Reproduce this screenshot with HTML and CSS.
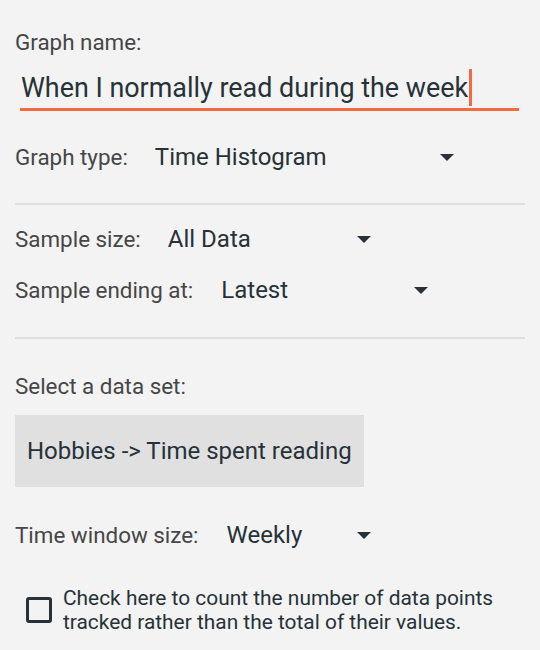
FILE: index.html
```html
<!DOCTYPE html>
<html>
<head>
<meta charset="utf-8">
<link rel="stylesheet" href="styles.css">
</head>
<body>
<div class="page">
  <div class="label name-label">Graph name:</div>
  <div class="name-input"><span class="name-text">When I normally read during the week</span><span class="cursor"></span></div>

  <div class="row type-row">
    <span class="label">Graph type:</span>
    <span class="select sel-type"><span class="value">Time Histogram</span><span class="arrow"></span></span>
  </div>

  <div class="divider div1"></div>

  <div class="row size-row">
    <span class="label">Sample size:</span>
    <span class="select sel-size"><span class="value">All Data</span><span class="arrow"></span></span>
  </div>
  <div class="row end-row">
    <span class="label">Sample ending at:</span>
    <span class="select sel-end"><span class="value">Latest</span><span class="arrow"></span></span>
  </div>

  <div class="divider div2"></div>

  <div class="label set-label">Select a data set:</div>
  <div class="dataset">Hobbies -&gt; Time spent reading</div>

  <div class="row window-row">
    <span class="label">Time window size:</span>
    <span class="select sel-window"><span class="value">Weekly</span><span class="arrow"></span></span>
  </div>

  <div class="check-row">
    <span class="checkbox"></span>
    <span class="check-text">Check here to count the number of data points tracked rather than the total of their values.</span>
  </div>
</div>
</body>
</html>
```

FILE: styles.css
```css
html, body {
  margin: 0;
  padding: 0;
  background: #f3f3f3;
}
body {
  font-family: Roboto, "Noto Sans", sans-serif;
  width: 540px;
  height: 650px;
  overflow: hidden;
}
.page {
  padding: 0 15px;
  display: flex;
  flex-direction: column;
}
.label {
  font-size: 22.4px;
  color: #464646;
  line-height: 26px;
}
.name-label {
  margin-top: 29px;
}
.name-input {
  margin-top: 14px;
  margin-left: 5px;
  margin-right: 6px;
  border-bottom: 3px solid #f26a3f;
  height: 39px;
  display: flex;
  align-items: flex-start;
  padding-left: 1px;
}
.name-text {
  font-size: 26.9px;
  color: #263238;
  line-height: 34px;
  margin-top: 2px;
}
.cursor {
  width: 3px;
  height: 37px;
  background: #f26a3f;
  margin-left: 1px;
}
.row {
  display: flex;
  align-items: center;
  height: 30px;
}
.select {
  display: flex;
  align-items: center;
}
.value {
  font-size: 24px;
  color: #263238;
  line-height: 30px;
}
.arrow {
  width: 0;
  height: 0;
  border-left: 7.5px solid transparent;
  border-right: 7.5px solid transparent;
  border-top: 7px solid #263238;
}
.type-row { margin-top: 31px; }
.sel-type { margin-left: 27px; width: 299px; justify-content: space-between; }
.divider {
  height: 2px;
  background: #dedede;
}
.div1 { margin-top: 31px; }
.size-row { margin-top: 19px; }
.sel-size { margin-left: 27px; width: 203px; justify-content: space-between; }
.end-row { margin-top: 21px; }
.sel-end { margin-left: 28px; width: 207px; justify-content: space-between; }
.div2 { margin-top: 32px; }
.set-label { margin-top: 34px; }
.dataset {
  margin-top: 16px;
  align-self: flex-start;
  background: #e0e0e0;
  width: 349px;
  box-sizing: border-box;
  height: 72px;
  padding-left: 12px;
  display: flex;
  align-items: center;
  font-size: 24px;
  color: #263238;
}
.window-row { margin-top: 33px; }
.sel-window { margin-left: 28px; width: 144px; justify-content: space-between; }
.check-row {
  margin-top: 36px;
  display: flex;
  align-items: center;
  padding-left: 11px;
}
.checkbox {
  flex: none;
  width: 20px;
  height: 20px;
  border: 3px solid #263238;
  border-radius: 3px;
  margin-right: 11px;
}
.check-text {
  font-size: 20.9px;
  line-height: 24px;
  color: #263238;
}
```
